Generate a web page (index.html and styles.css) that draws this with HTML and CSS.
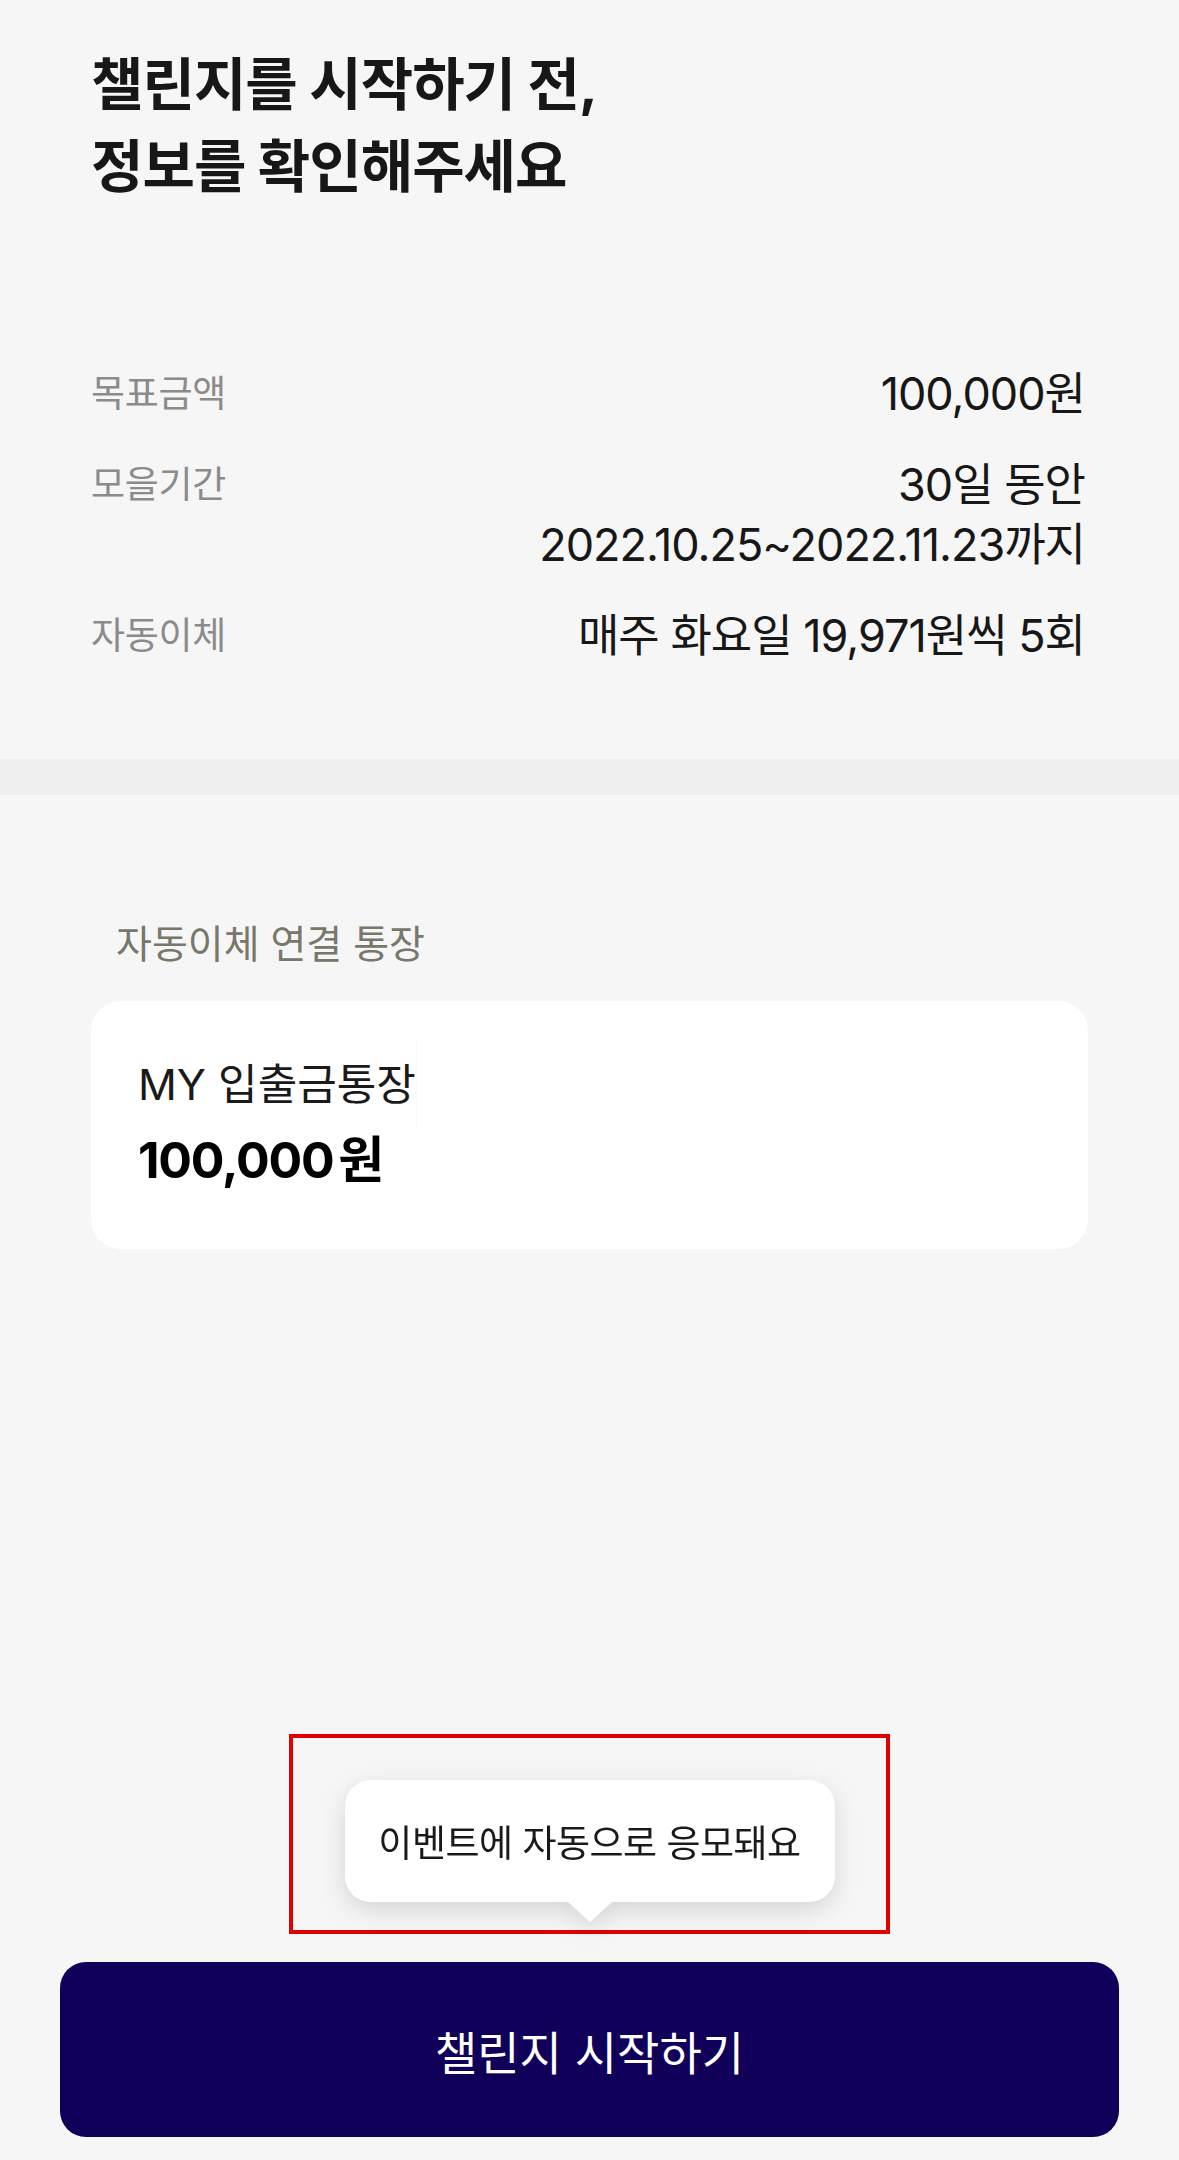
FILE: index.html
```html
<!DOCTYPE html>
<html lang="ko">
<head>
    <meta charset="UTF-8">
    <title>챌린지 시작하기</title>
    <meta name="viewport" content="width=device-width, initial-scale=1.0">
    <link rel="stylesheet" href="styles.css">
</head>
<body>
<div class="page">
    <div class="summary">
        <h1 class="title">챌린지를 시작하기 전,<br>정보를 확인해주세요</h1>
        <div class="rows">
            <div class="row">
                <span class="label">목표금액</span>
                <span class="value">100,000원</span>
            </div>
            <div class="row">
                <span class="label">모을기간</span>
                <span class="value">30일 동안<br>2022.10.25~2022.11.23까지</span>
            </div>
            <div class="row">
                <span class="label">자동이체</span>
                <span class="value">매주 화요일 19,971원씩 5회</span>
            </div>
        </div>
    </div>
    <div class="divider"></div>
    <div class="account">
        <div class="account-title">자동이체 연결 통장</div>
        <div class="card">
            <div class="card-name">MY 입출금통장<span class="mask"></span></div>
            <div class="card-amount">100,000 원</div>
        </div>
    </div>
    <div class="bottom">
        <div class="highlight">
            <div class="bubble">
                <div class="bubble-box">이벤트에 자동으로 응모돼요</div>
                <div class="bubble-tail"></div>
            </div>
        </div>
        <button class="start">챌린지 시작하기</button>
    </div>
</div>
</body>
</html>
```

FILE: styles.css
```css
body {
    margin: 0;
    background: #f6f6f6;
    font-family: Inter, "Noto Sans CJK KR", sans-serif;
    color: #171717;
}

.page {
    height: 2160px;
    display: flex;
    flex-direction: column;
}

.summary {
    padding: 44px 94px 93px 91px;
}

.title {
    margin: 0;
    font-size: 57px;
    line-height: 82px;
    font-weight: 700;
    letter-spacing: -1px;
}

.rows {
    margin-top: 156px;
    display: flex;
    flex-direction: column;
    gap: 31px;
}

.row {
    display: flex;
    justify-content: space-between;
    line-height: 60px;
}

.label {
    font-size: 37px;
    color: #8b8b8b;
    letter-spacing: -0.3px;
}

.value {
    font-size: 45px;
    text-align: right;
    letter-spacing: -1px;
}

.divider {
    height: 36px;
    background: #efefef;
}

.account {
    padding: 124px 91px 0;
}

.account-title {
    padding-left: 25px;
    font-size: 39px;
    line-height: 50px;
    color: #77776a;
}

.card {
    margin-top: 32px;
    background: white;
    border-radius: 30px;
    padding: 55px 47px 59px;
}

.card-name {
    font-size: 43px;
    line-height: 56px;
    color: #1a1a1a;
    display: flex;
    align-items: center;
}

.mask {
    width: 131px;
    height: 90px;
    margin: -17px 0;
    background: white;
    border-left: 1px solid #f8f8f8;
}

.card-amount {
    margin-top: 18px;
    font-size: 50px;
    line-height: 60px;
    font-weight: 700;
    color: #000;
    letter-spacing: -1.2px;
    word-spacing: -6px;
}

.bottom {
    margin-top: auto;
    display: flex;
    flex-direction: column;
    align-items: center;
    gap: 28px;
    padding-bottom: 23px;
}

.highlight {
    width: 593px;
    height: 150px;
    border: 4px solid #e10000;
    display: flex;
    justify-content: center;
    padding-top: 42px;
}

.bubble {
    display: flex;
    flex-direction: column;
    align-items: center;
    filter: drop-shadow(0 8px 12px rgba(0, 0, 0, 0.13));
}

.bubble-box {
    width: 490px;
    height: 122px;
    background: white;
    border-radius: 26px;
    display: flex;
    align-items: center;
    justify-content: center;
    font-size: 37px;
    letter-spacing: -0.5px;
    color: #1a1a1a;
}

.bubble-tail {
    width: 0;
    height: 0;
    border-left: 22px solid transparent;
    border-right: 22px solid transparent;
    border-top: 20px solid white;
}

.start {
    width: 1059px;
    height: 175px;
    border: none;
    border-radius: 26px;
    background: #10005a;
    color: white;
    font-family: inherit;
    font-size: 46px;
}
```
